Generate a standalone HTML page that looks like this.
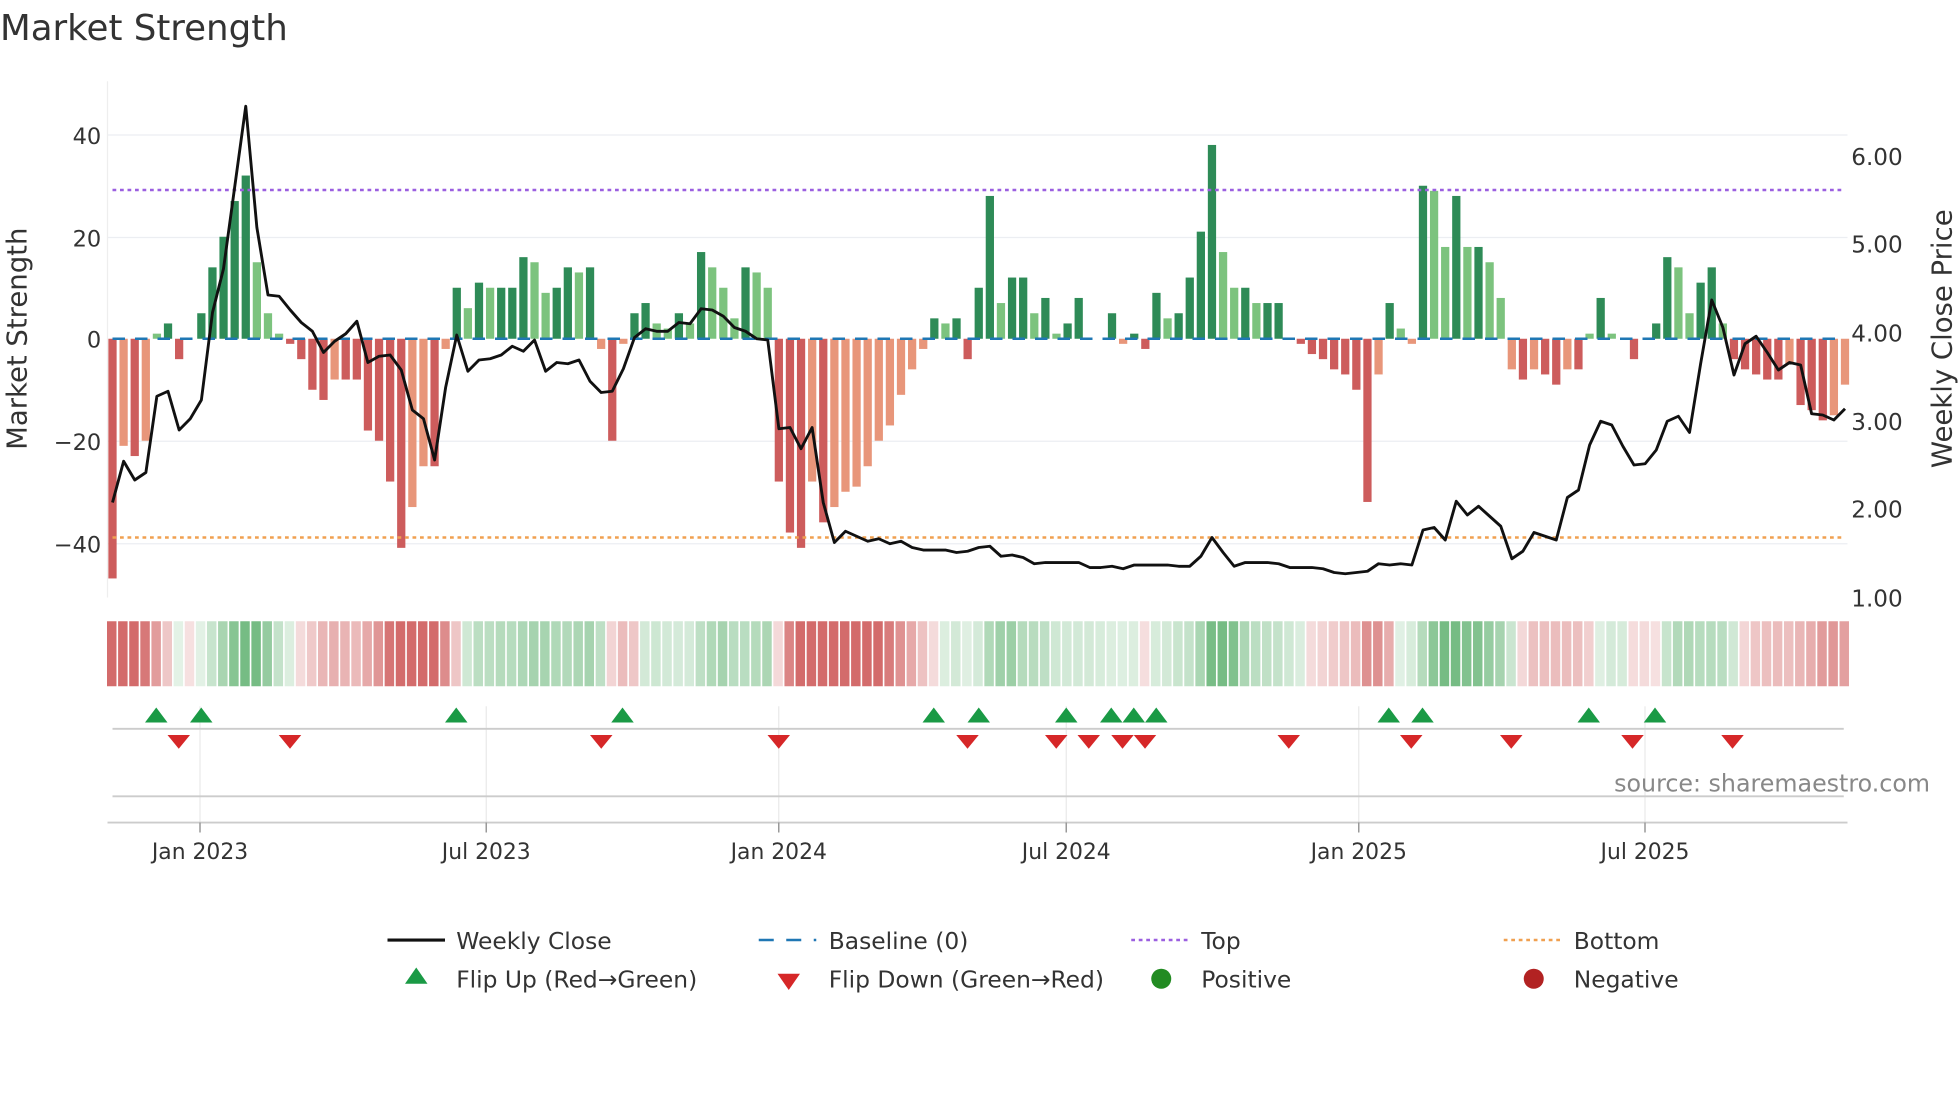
<!DOCTYPE html>
<html><head><meta charset="utf-8"><style>
html,body{margin:0;padding:0;background:#fff;overflow:hidden}
svg{display:block;font-family:"DejaVu Sans","Liberation Sans",sans-serif}
</style></head><body>
<svg id="s" width="1960" height="1102" viewBox="0 0 1568 881.6" xmlns="http://www.w3.org/2000/svg">
<rect width="1568" height="882" fill="#fff"/>
<text x="0" y="32" font-size="28.5" fill="#333">Market Strength</text>
<g stroke="#eceef2" stroke-width="1">
<line x1="86" y1="108" x2="1478" y2="108"/><line x1="86" y1="190" x2="1478" y2="190"/>
<line x1="86" y1="353" x2="1478" y2="353"/><line x1="86" y1="435" x2="1478" y2="435"/>
</g>
<line x1="86" y1="65" x2="86" y2="478" stroke="#eee"/>
<g id="bars"></g>
<line x1="90" y1="271" x2="1475" y2="271" stroke="#1f77b4" stroke-width="2" stroke-dasharray="10,8"/>
<line x1="90" y1="152" x2="1475" y2="152" stroke="#9b5fe0" stroke-width="2" stroke-dasharray="3,3"/>
<line x1="90" y1="430" x2="1475" y2="430" stroke="#f0a050" stroke-width="2" stroke-dasharray="3,3"/>
<polyline id="price" fill="none" stroke="#111" stroke-width="2.3" stroke-linejoin="round"/>
<g font-size="18" fill="#333" text-anchor="end">
<text x="81" y="115">40</text><text x="81" y="197">20</text><text x="81" y="278">0</text>
<text x="81" y="360">−20</text><text x="81" y="442">−40</text>
</g>
<g font-size="18.5" fill="#333">
<text x="1481" y="132">6.00</text><text x="1481" y="202">5.00</text><text x="1481" y="273">4.00</text>
<text x="1481" y="344">3.00</text><text x="1481" y="414">2.00</text><text x="1481" y="485">1.00</text>
</g>
<text transform="translate(21,271) rotate(-90)" font-size="22" fill="#333" text-anchor="middle">Market Strength</text>
<text transform="translate(1561,271) rotate(-90)" font-size="22" fill="#333" text-anchor="middle">Weekly Close Price</text>
<g id="heat"></g>
<g stroke="#eaeaea" stroke-width="1">
<line x1="160" y1="565" x2="160" y2="658"/><line x1="389" y1="565" x2="389" y2="658"/>
<line x1="623" y1="565" x2="623" y2="658"/><line x1="853" y1="565" x2="853" y2="658"/>
<line x1="1087" y1="565" x2="1087" y2="658"/><line x1="1316" y1="565" x2="1316" y2="658"/>
</g>
<line x1="90" y1="583" x2="1475" y2="583" stroke="#ccc" stroke-width="1.5"/>
<line x1="90" y1="637" x2="1475" y2="637" stroke="#ccc" stroke-width="1.5"/>
<line x1="86" y1="658" x2="1478" y2="658" stroke="#ccc" stroke-width="1.5"/>
<g stroke="#999" stroke-width="1.2">
<line x1="160" y1="658" x2="160" y2="666"/><line x1="389" y1="658" x2="389" y2="666"/>
<line x1="623" y1="658" x2="623" y2="666"/><line x1="853" y1="658" x2="853" y2="666"/>
<line x1="1087" y1="658" x2="1087" y2="666"/><line x1="1316" y1="658" x2="1316" y2="666"/>
</g>
<g id="marks"></g>
<text x="1544" y="633" font-size="19" fill="#888" text-anchor="end">source: sharemaestro.com</text>
<g font-size="17.5" fill="#333" text-anchor="middle">
<text x="160" y="687">Jan 2023</text><text x="389" y="687">Jul 2023</text><text x="623" y="687">Jan 2024</text>
<text x="853" y="687">Jul 2024</text><text x="1087" y="687">Jan 2025</text><text x="1316" y="687">Jul 2025</text>
</g>
<g font-size="18.7" fill="#333">
<line x1="310" y1="752" x2="356" y2="752" stroke="#111" stroke-width="2.5"/><text x="365" y="759">Weekly Close</text>
<line x1="607" y1="752" x2="653" y2="752" stroke="#1f77b4" stroke-width="2" stroke-dasharray="12,10"/><text x="663" y="759">Baseline (0)</text>
<line x1="905" y1="752" x2="951" y2="752" stroke="#9b5fe0" stroke-width="2" stroke-dasharray="3,3"/><text x="961" y="759">Top</text>
<line x1="1203" y1="752" x2="1249" y2="752" stroke="#f0a050" stroke-width="2" stroke-dasharray="3,3"/><text x="1259" y="759">Bottom</text>
<polygon points="333,774 342,787 324,787" fill="#1a9a45"/><text x="365" y="790">Flip Up (Red→Green)</text>
<polygon points="622,779 640,779 631,792" fill="#d62728"/><text x="663" y="790">Flip Down (Green→Red)</text>
<circle cx="929" cy="783" r="8" fill="#228b22"/><text x="961" y="790">Positive</text>
<circle cx="1227" cy="783" r="8" fill="#b22222"/><text x="1259" y="790">Negative</text>
</g>
</svg>
<script>
var V=[-47,-21,-23,-20,1,3,-4,0,5,14,20,27,32,15,5,1,-1,-4,-10,-12,-8,-8,-8,-18,-20,-28,-41,-33,-25,-25,-2,10,6,11,10,10,10,16,15,9,10,14,13,14,-2,-20,-1,5,7,3,2,5,3,17,14,10,4,14,13,10,-28,-38,-41,-28,-36,-33,-30,-29,-25,-20,-17,-11,-6,-2,4,3,4,-4,10,28,7,12,12,5,8,1,3,8,0,0,5,-1,1,-2,9,4,5,12,21,38,17,10,10,7,7,7,0,-1,-3,-4,-6,-7,-10,-32,-7,7,2,-1,30,29,18,28,18,18,15,8,-6,-8,-6,-7,-9,-6,-6,1,8,1,0,-4,0,3,16,14,5,11,14,3,-4,-6,-7,-8,-8,-5,-13,-14,-16,-15,-9];
var P=[402,369,384,378,317,313,344,335,320,250,215,150,85,182,236,237,248,258,265,282,273,267,257,290,285,284,296,328,335,368,310,268,297,288,287,284,277,281,272,297,290,291,288,305,314,313,295,270,263,265,265,258,259,247,248,253,262,265,271,272,343,342,359,342,402,434,425,429,433,431,435,433,438,440,440,440,442,441,438,437,445,444,446,451,450,450,450,450,454,454,453,455,452,452,452,452,453,453,445,430,442,453,450,450,450,451,454,454,454,455,458,459,458,457,451,452,451,452,424,422,432,401,412,405,413,421,447,441,426,429,432,398,392,356,337,340,357,372,371,360,337,333,346,291,240,262,300,275,269,282,296,290,292,331,332,336,327];
var n=V.length,x0=90,dx=(1476-90)/(n-1),b="",h="",pts=[];
for(var i=0;i<n;i++){var v=V[i],pv=i?V[i-1]:0,x=x0+dx*i,strong=Math.abs(v)>=Math.abs(pv),c;
if(v>=0)c=strong?"#2e8b57":"#7cc37e";else c=strong?"#cd5c5c":"#e8967a";
var y=271-v*4.08;if(v!==0)b+='<rect x="'+(x-3.3)+'" y="'+Math.min(y,271)+'" width="6.6" height="'+Math.abs(v*4.08)+'" fill="'+c+'"/>';
var s=0,k=0;for(var j=Math.max(0,i-2);j<=i;j++){s+=V[j];k++}s/=k;var a=Math.min(1,0.2+Math.abs(s)/30);
var hc=s>=0?"rgba(60,160,80,"+a*0.7+")":"rgba(200,70,70,"+a*0.8+")";
h+='<rect x="'+(x-4.4)+'" y="497" width="'+(dx-1.3)+'" height="52" fill="'+hc+'"/>';
pts.push(x.toFixed(1)+","+P[i]);}
document.getElementById("bars").innerHTML=b;document.getElementById("heat").innerHTML=h;
document.getElementById("price").setAttribute("points",pts.join(" "));
var up=[125,161,365,498,747,783,853,889,907,925,1111,1138,1271,1324],dn=[143,232,481,623,774,845,871,898,916,1031,1129,1209,1306,1386],m="";
up.forEach(function(x){m+='<polygon points="'+x+',566 '+(x+9)+',578 '+(x-9)+',578" fill="#1a9a45"/>'});
dn.forEach(function(x){m+='<polygon points="'+(x-9)+',588 '+(x+9)+',588 '+x+',599" fill="#d62728"/>'});
document.getElementById("marks").innerHTML=m;
</script>
</body></html>
